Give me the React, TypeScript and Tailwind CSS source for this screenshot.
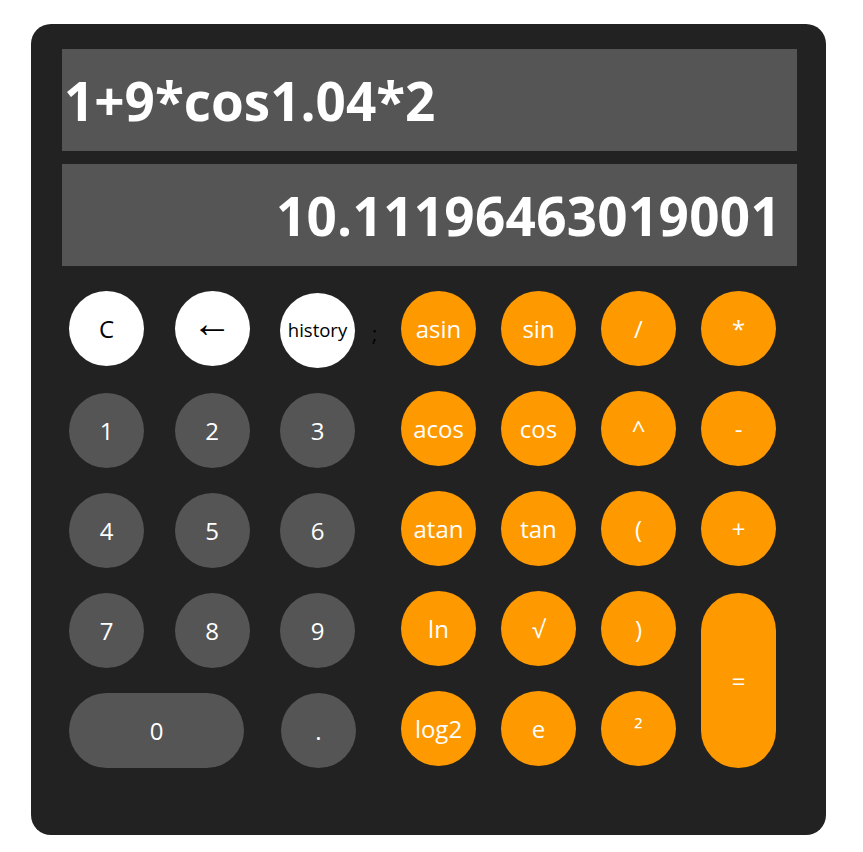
import React from 'react';

type Kind = 'white' | 'gray' | 'orange';

const kindClass: Record<Kind, string> = {
  white: 'bg-white text-black',
  gray: 'bg-[#555555] text-white',
  orange: 'bg-[#ff9900] text-white',
};

interface KeyProps {
  label: string;
  kind: Kind;
  className?: string;
  textClass?: string;
}

const Key: React.FC<KeyProps> = ({ label, kind, className = '', textClass = 'text-[24px]' }) => (
  <button
    type="button"
    className={`flex items-center justify-center rounded-full leading-none ${kindClass[kind]} ${textClass} ${className}`}
  >
    {label}
  </button>
);

const orangeKeys = [
  'asin', 'sin', '/', '*',
  'acos', 'cos', '^', '-',
  'atan', 'tan', '(', '+',
  'ln', '√', ')',
  'log2', 'e', '²',
];

const App: React.FC = () => {
  return (
    <div className="min-h-screen bg-white pt-[24px] pl-[31px]" style={{ fontFamily: '"Open Sans", "Noto Sans", sans-serif' }}>
      <div className="w-[795px] h-[811px] rounded-[20px] bg-[#222222] pl-[31px] pr-[29px] pt-[25px]">
        <div className="h-[102px] bg-[#555555] flex items-center pl-[2px] text-white font-bold text-[53px] leading-none">
          1+9*cos1.04*2
        </div>
        <div className="mt-[13px] h-[102px] bg-[#555555] flex items-center justify-end pr-[16px] text-white font-bold text-[53px] tracking-[0.3px] leading-none">
          10.11196463019001
        </div>

        <div className="mt-[25px] flex">
          <div className="ml-[7px] pt-[2px] grid grid-cols-[75px_75px_75px] auto-rows-[75px] gap-x-[30.5px] gap-y-[25px]">
            <Key label="C" kind="white" className="-mt-[2px] h-[75px] w-[75px]" />
            <Key label="←" kind="white" className="-mt-[2px] h-[75px] w-[75px] pb-[14px]" textClass="text-[40px]" />
            <Key label="history" kind="white" className="h-[75px] w-[75px]" textClass="text-[18.5px]" />
            {['1', '2', '3', '4', '5', '6', '7', '8', '9'].map((n) => (
              <Key key={n} label={n} kind="gray" className="h-[75px] w-[75px]" />
            ))}
            <Key label="0" kind="gray" className="col-span-2 h-[75px] w-[175px]" />
            <Key label="." kind="gray" className="ml-[1px] h-[75px] w-[75px]" />
          </div>

          <div className="w-[46px] pl-[17px] pt-[33px] text-black text-[20px] leading-none">;</div>

          <div className="grid grid-cols-[75px_75px_75px_75px] auto-rows-[75px] gap-[25px]">
            {orangeKeys.slice(0, 15).map((k) => (
              <Key key={k} label={k} kind="orange" className="h-[75px] w-[75px]" />
            ))}
            <Key label="=" kind="orange" className="row-span-2 mt-[2px] h-[175px] w-[75px]" />
            {orangeKeys.slice(15).map((k) => (
              <Key key={k} label={k} kind="orange" className="h-[75px] w-[75px]" />
            ))}
          </div>
        </div>
      </div>
    </div>
  );
};

export default App;
